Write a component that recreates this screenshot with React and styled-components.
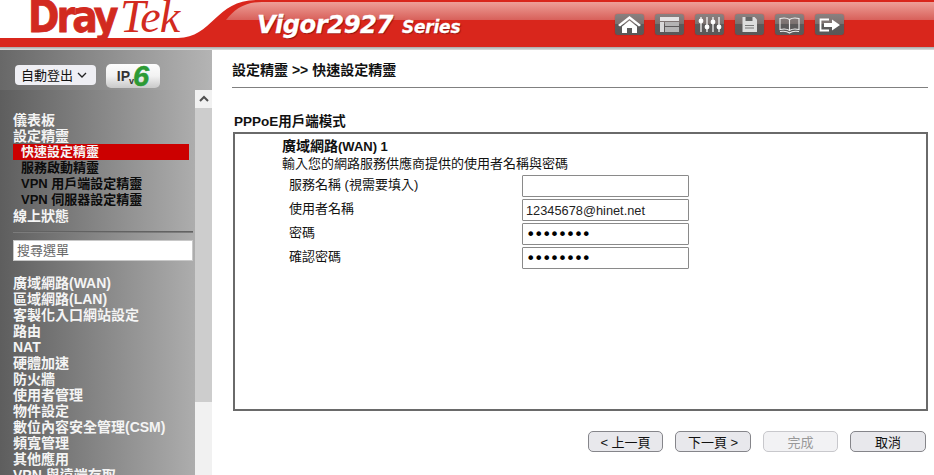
import React from "react";
import styled, { createGlobalStyle } from "styled-components";

const CJK = `"Liberation Sans", "Noto Sans CJK TC", sans-serif`;

const Global = createGlobalStyle`
  html, body { margin: 0; padding: 0; background: #fff; overflow: hidden; }
  body { font-family: ${CJK}; }
  * { box-sizing: border-box; }
`;

const Page = styled.div`
  width: 934px;
  height: 475px;
  display: flex;
  flex-direction: column;
  overflow: hidden;
`;

const Banner = styled.header`
  position: relative;
  flex: 0 0 50px;
  display: flex;
  align-items: flex-start;
  padding-left: 28px;
  overflow: hidden;
`;

const BannerArt = styled.svg`
  position: absolute;
  inset: 0;
`;

const Logo = styled.div`
  position: relative;
  display: flex;
  align-items: baseline;
  width: 229px;
  height: 38px;
  color: #d22a20;
  line-height: 38px;
  margin-top: -2px;
`;

const LogoBold = styled.span`
  font: 900 44px/38px "DejaVu Sans", sans-serif;
  letter-spacing: -3.4px;
  transform: scaleX(0.86);
  transform-origin: left;
  width: 92px;
  -webkit-text-stroke: 0.8px #d22a20;
`;

const LogoSerif = styled.span`
  font: italic 400 46px/38px "Liberation Serif", serif;
  letter-spacing: -1px;
`;

const Model = styled.div`
  position: relative;
  display: flex;
  align-items: baseline;
  gap: 9px;
  margin-top: 11px;
  color: #fff;
  font-family: "DejaVu Sans", sans-serif;
  font-style: italic;
  font-weight: 700;
  text-shadow: 1px 1px 1px rgba(90, 0, 0, 0.6);
  line-height: 28px;
  -webkit-text-stroke: 0.3px #fff;
`;

const ModelName = styled.span`
  font-size: 24.300px;
  letter-spacing: -0.5px;
`;

const ModelSeries = styled.span`
  font-size: 17px;
  letter-spacing: -0.2px;
`;

const Toolbar = styled.nav`
  position: absolute;
  top: 14px;
  right: 90px;
  display: flex;
  gap: 11px;
`;

const ToolButton = styled.div`
  width: 29px;
  height: 21px;
  border-radius: 3px;
  background: linear-gradient(#8a8080 0, #7c7270 45%, #5c5a5a 50%, #5a5858 100%);
  box-shadow: 0 0 1px rgba(60, 0, 0, 0.6);
  display: flex;
  align-items: center;
  justify-content: center;
`;

const Body = styled.div`
  flex: 1;
  display: flex;
  min-height: 0;
`;

const Sidebar = styled.aside`
  flex: 0 0 212px;
  display: flex;
  flex-direction: column;
  min-height: 0;
`;

const SideTop = styled.div`
  flex: 0 0 40px;
  display: flex;
  align-items: flex-start;
  gap: 10px;
  padding: 15px 0 0 15px;
  background: linear-gradient(90deg, #686868, #b4b4b4);
`;

const SelectWrap = styled.div`
  position: relative;
  width: 81px;
  height: 20px;
`;

const LogoutSelect = styled.select`
  appearance: none;
  width: 100%;
  height: 100%;
  border: 0;
  border-radius: 4px;
  background: #efeff4;
  color: #111;
  font: 13px ${CJK};
  padding-left: 6px;
`;

const SelectArrow = styled.svg`
  position: absolute;
  right: 9px;
  top: 7px;
  pointer-events: none;
`;

const Ipv6Button = styled.div`
  width: 54px;
  height: 24px;
  border-radius: 5px;
  background: linear-gradient(#fdfdfd 0, #f2f2f2 50%, #c9c9c9 100%);
  display: flex;
  align-items: center;
  justify-content: center;
  color: #333;
  font: 700 14px "Liberation Sans", sans-serif;
  margin-top: -1px;
`;

const IpV = styled.span`
  font-size: 9px;
  align-self: flex-end;
  margin: 0 0 2px -1px;
`;

const IpSix = styled.span`
  color: #2c9a34;
  font: italic 700 29px/24px "Liberation Sans", sans-serif;
  margin-left: -1px;
  -webkit-text-stroke: 0.5px #2c9a34;
`;

const SideBody = styled.div`
  flex: 1;
  display: flex;
  min-height: 0;
`;

const MenuPane = styled.div`
  width: 195px;
  overflow: hidden;
  padding: 22px 2px 0 13px;
  background: linear-gradient(90deg, #5e5e5e, #adadad);
`;

const MenuItem = styled.div`
  height: 16px;
  line-height: 16px;
  font-size: ${(p) => (p.$sub ? "13px" : "14px")};
  font-weight: 700;
  white-space: nowrap;
  color: ${(p) => (p.$sub && !p.$active ? "#0c0c0c" : "#f4f4f4")};
  padding-left: ${(p) => (p.$sub ? "8px" : "0")};
  margin-right: ${(p) => (p.$sub ? "4px" : "0")};
  background: ${(p) => (p.$active ? "#cc0000" : "transparent")};
`;

const MenuRule = styled.hr`
  margin: 7px 0 7px;
  border: 0;
  height: 2px;
  background: linear-gradient(#555, #888);
`;

const SearchBox = styled.input`
  display: block;
  width: 180px;
  height: 21px;
  border: 1px solid #c8c8c8;
  background: #fff;
  font: 13px ${CJK};
  padding: 0 3px;
  margin-bottom: 14px;
  &::placeholder { color: #666; opacity: 1; }
`;

const Scrollbar = styled.div`
  width: 17px;
  background: #f1f1f1;
  display: flex;
  flex-direction: column;
`;

const ScrollUp = styled.div`
  height: 18px;
  display: flex;
  align-items: center;
  justify-content: center;
`;

const ScrollThumb = styled.div`
  height: 294px;
  background: #cdcdcd;
`;

const Main = styled.main`
  flex: 1;
  padding: 12px 6px 0 20px;
  color: #111;
  font-size: 13px;
`;

const PageTitle = styled.h1`
  margin: 0;
  height: 26px;
  font-size: 14px;
  line-height: 16px;
  font-weight: 700;
  border-bottom: 1px solid #808080;
`;

const SectionTitle = styled.h2`
  margin: 26px 0 0 2px;
  height: 18px;
  font-size: 13.500px;
  line-height: 16px;
  font-weight: 700;
`;

const FormBox = styled.section`
  margin-left: 1px;
  height: 279px;
  border: 2px solid #6a6a6a;
  padding: 4px 0 0 47px;
`;

const BoxHeading = styled.div`
  font-size: 14px;
  font-weight: 700;
  line-height: 16px;
`;

const HeadingLatin = styled.span`
  font-size: 13px;
`;

const BoxHint = styled.div`
  line-height: 18px;
  margin-bottom: 1px;
`;

const FieldRow = styled.label`
  display: flex;
  align-items: center;
  height: 24px;
  padding-left: 7px;
`;

const FieldLabel = styled.span`
  width: 233px;
  padding-bottom: 5px;
`;

const FieldInput = styled.input`
  width: 167px;
  height: 22px;
  border: 1px solid #8a8a8a;
  border-radius: 1px;
  padding: 0 3px;
  color: ${(p) => (p.type === "password" ? "#000" : "#222")};
  font: ${(p) => (p.type === "password" ? `16px "DejaVu Sans", sans-serif` : `12.800px "Liberation Sans", sans-serif`)};
  letter-spacing: ${(p) => (p.type === "password" ? "-1.500px" : "0")};
`;

const ButtonBar = styled.div`
  display: flex;
  justify-content: flex-end;
  gap: 12px;
  margin-top: 20px;
  padding-right: 2px;
`;

const WizardButton = styled.button`
  width: ${(p) => p.$w}px;
  height: 21px;
  padding: 0;
  border-radius: 5px;
  border: 1px solid ${(p) => (p.disabled ? "#c8c8cc" : "#85858a")};
  background: ${(p) => (p.disabled ? "#f2f2f4" : "#e8e8ec")};
  color: ${(p) => (p.disabled ? "#999" : "#111")};
  font: 13px ${CJK};
`;

const tools = [
  <path key="home" d="M3 11 14.500 2 26 11l-2 1.500-9.500-7.500L5 12.500zM7 12.500l7.500-6 7.500 6V19h-5v-5h-5v5H7z" fill="#fff" />,
  <g key="layout" fill="#d8d8d8">
    <path d="M5 3h19v4H5z" fill="#e4e4e4" />
    <path d="M5 8h4v10H5z" />
    <path d="M10 8h14v4H10zM10 13h14v5H10z" fill="#b4b4b4" />
  </g>,
  <g key="sliders" stroke="#fff" strokeWidth="1.200" fill="#fff">
    <path d="M6 3v15M12 3v15M18 3v15M24 3v15" />
    <circle cx="6" cy="7" r="1.800" />
    <circle cx="12" cy="13" r="1.800" />
    <circle cx="18" cy="8" r="1.800" />
    <circle cx="24" cy="13" r="1.800" />
  </g>,
  <g key="save">
    <path d="M7.500 3h12l2.500 2.500V18h-14.500z" fill="#ddd" />
    <path d="M10.500 3h7v4h-7z" fill="#666" />
    <path d="M10 11h9v1h-9zM10 13.500h9v1h-9z" fill="#777" />
  </g>,
  <g key="book" stroke="#eee" strokeWidth="1.100" fill="none">
    <path d="M14.500 5.500C12 3.800 8 3.800 5 4.500v11c3-.7 7-.7 9.500 1 2.500-1.700 6.500-1.700 9.500-1v-11c-3-.7-7-.7-9.500 1zM14.500 5.500v11" />
    <path d="M5 17.500c3-.5 7-.5 9.500 1.500 2.500-2 6.500-2 9.500-1.500" />
  </g>,
  <g key="exit">
    <path d="M14 5.500H5.500v11H14" fill="none" stroke="#fff" strokeWidth="1.800" />
    <path d="M9 9h8V5.500l8 5.500-8 5.500V13H9z" fill="#fff" />
  </g>,
];

const topMenu = ["儀表板", "設定精靈"];
const wizardMenu = ["快速設定精靈", "服務啟動精靈", "VPN 用戶端設定精靈", "VPN 伺服器設定精靈"];
const mainMenu = [
  "廣域網路(WAN)",
  "區域網路(LAN)",
  "客製化入口網站設定",
  "路由",
  "NAT",
  "硬體加速",
  "防火牆",
  "使用者管理",
  "物件設定",
  "數位內容安全管理(CSM)",
  "頻寬管理",
  "其他應用",
  "VPN 與遠端存取",
];

const fields = [
  { label: "服務名稱 (視需要填入)", value: "", type: "text" },
  { label: "使用者名稱", value: "12345678@hinet.net", type: "text" },
  { label: "密碼", value: "abcdefgh", type: "password" },
  { label: "確認密碼", value: "abcdefgh", type: "password" },
];

export default function App() {
  return (
    <Page>
      <Global />
      <Banner>
        <BannerArt width="934" height="50" viewBox="0 0 934 50">
          <defs>
            <linearGradient id="gloss" x1="0" y1="0" x2="0" y2="1">
              <stop offset="0" stopColor="#ee9f98" />
              <stop offset="1" stopColor="#d8605a" />
            </linearGradient>
            <linearGradient id="edge" x1="0" y1="0" x2="0" y2="1">
              <stop offset="0" stopColor="#a8a8a8" />
              <stop offset="1" stopColor="#dedede" />
            </linearGradient>
          </defs>
          <path d="M0 38H178C212 38 216 0 256 0H934V47H0z" fill="#d9261c" />
          <path d="M226 20C234 10 244 2 262 2H934V20z" fill="url(#gloss)" />
          <rect y="47" width="934" height="3" fill="url(#edge)" />
        </BannerArt>
        <Logo>
          <LogoBold>Dray</LogoBold>
          <LogoSerif>Tek</LogoSerif>
        </Logo>
        <Model>
          <ModelName>Vigor2927</ModelName>
          <ModelSeries>Series</ModelSeries>
        </Model>
        <Toolbar>
          {tools.map((icon) => (
            <ToolButton key={icon.key}>
              <svg width="29" height="21" viewBox="0 0 29 21">{icon}</svg>
            </ToolButton>
          ))}
        </Toolbar>
      </Banner>
      <Body>
        <Sidebar>
          <SideTop>
            <SelectWrap>
              <LogoutSelect defaultValue="auto">
                <option value="auto">自動登出</option>
              </LogoutSelect>
              <SelectArrow width="10" height="6" viewBox="0 0 10 6">
                <path d="M1 1l4 4 4-4" fill="none" stroke="#222" strokeWidth="1.300" />
              </SelectArrow>
            </SelectWrap>
            <Ipv6Button>
              IP<IpV>v</IpV>
              <IpSix>6</IpSix>
            </Ipv6Button>
          </SideTop>
          <SideBody>
            <MenuPane>
              {topMenu.map((item) => (
                <MenuItem key={item}>{item}</MenuItem>
              ))}
              {wizardMenu.map((item, i) => (
                <MenuItem key={item} $sub $active={i === 0}>
                  {item}
                </MenuItem>
              ))}
              <MenuItem>線上狀態</MenuItem>
              <MenuRule />
              <SearchBox placeholder="搜尋選單" />
              {mainMenu.map((item) => (
                <MenuItem key={item}>{item}</MenuItem>
              ))}
            </MenuPane>
            <Scrollbar>
              <ScrollUp>
                <svg width="10" height="8" viewBox="0 0 10 8">
                  <path d="M1 6l4-4 4 4" fill="none" stroke="#505050" strokeWidth="2" />
                </svg>
              </ScrollUp>
              <ScrollThumb />
            </Scrollbar>
          </SideBody>
        </Sidebar>
        <Main>
          <PageTitle>設定精靈 &gt;&gt; 快速設定精靈</PageTitle>
          <SectionTitle>PPPoE用戶端模式</SectionTitle>
          <FormBox>
            <BoxHeading>
              廣域網路<HeadingLatin>(WAN) 1</HeadingLatin>
            </BoxHeading>
            <BoxHint>輸入您的網路服務供應商提供的使用者名稱與密碼</BoxHint>
            {fields.map((f) => (
              <FieldRow key={f.label}>
                <FieldLabel>{f.label}</FieldLabel>
                <FieldInput type={f.type} defaultValue={f.value} />
              </FieldRow>
            ))}
          </FormBox>
          <ButtonBar>
            <WizardButton $w={75}>&lt; 上一頁</WizardButton>
            <WizardButton $w={76}>下一頁 &gt;</WizardButton>
            <WizardButton $w={75} disabled>完成</WizardButton>
            <WizardButton $w={76}>取消</WizardButton>
          </ButtonBar>
        </Main>
      </Body>
    </Page>
  );
}
